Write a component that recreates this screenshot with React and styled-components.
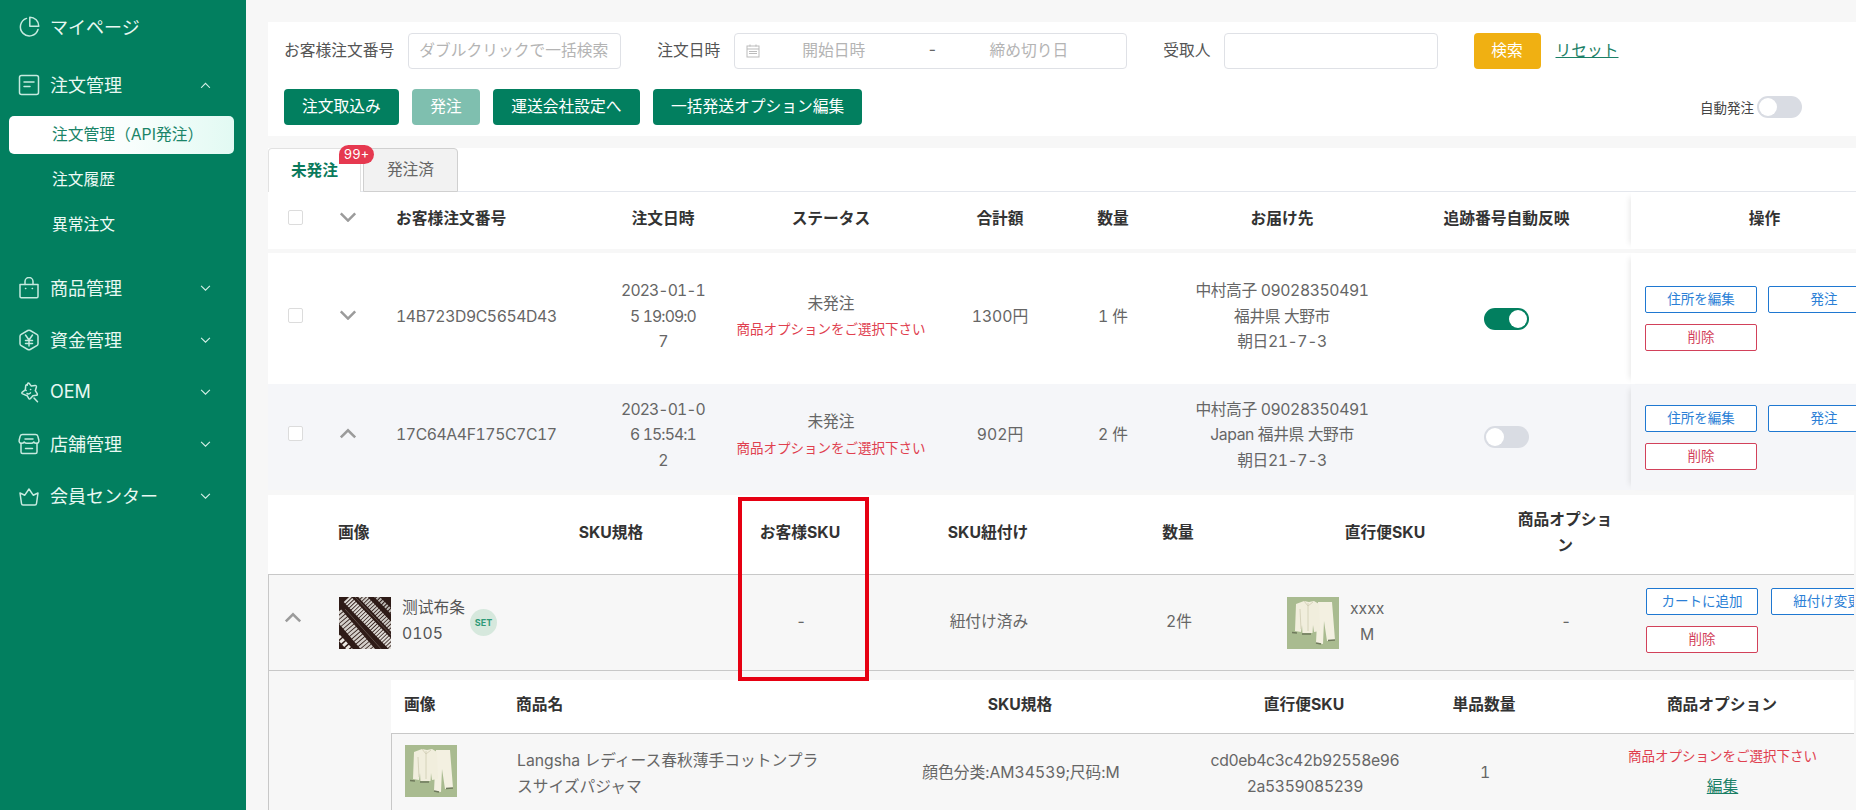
import React from "react";
import styled, { createGlobalStyle } from "styled-components";

const GlobalStyle = createGlobalStyle`
  html, body {
    margin: 0;
    padding: 0;
    height: 100%;
    overflow: hidden;
    background: #f7f7f7;
  }
  body {
    font-family: Inter, "Noto Sans CJK JP", sans-serif;
    font-size: 15.75px;
    font-variant-numeric: tabular-nums;
    color: #666;
  }
  * {
    box-sizing: border-box;
  }
`;

const orders = [
  {
    id: "14B723D9C5654D43",
    date: ["2023-01-1", "5 19:09:0", "7"],
    total: "1300円",
    qty: "1 件",
    address: ["中村高子 09028350491", "福井県 大野市", "朝日21-7-3"],
    on: true,
    open: false,
  },
  {
    id: "17C64A4F175C7C17",
    date: ["2023-01-0", "6 15:54:1", "2"],
    total: "902円",
    qty: "2 件",
    address: ["中村高子 09028350491", "Japan 福井県 大野市", "朝日21-7-3"],
    on: false,
    open: true,
  },
];

const Chevron = ({ up, size = 18, color = "#9b9b9b", width = 2.8 }) => (
  <svg width={size} height={size * 0.6} viewBox="0 0 20 12" fill="none" stroke={color} strokeWidth={width}>
    <path d={up ? "M2 10.5L10 2.5l8 8" : "M2 1.5l8 8 8-8"} />
  </svg>
);

const NavIcon = ({ children }) => (
  <svg width="22" height="22" viewBox="0 0 22 22" fill="none" stroke="#c6eadf" strokeWidth="1.5" strokeLinecap="round" strokeLinejoin="round">
    {children}
  </svg>
);

const navIcons = {
  pie: (
    <>
      <path d="M8.500 2.400A9 9 0 1 0 20 13.500" />
      <path d="M11.800 1.200a9 9 0 0 1 9 9h-9z" />
    </>
  ),
  doc: (
    <>
      <rect x="1.500" y="1.500" width="19" height="19" rx="2" />
      <path d="M6 8h10M6 12.500h6" />
    </>
  ),
  bag: (
    <>
      <path d="M2 7.500h18v12a1.200 1.200 0 0 1-1.200 1.200H3.200A1.200 1.200 0 0 1 2 19.500z" />
      <path d="M7 7.500V4.500a4 4 0 0 1 8 0v3" />
      <path d="M7.500 11.500h.3M14.200 11.500h.3" />
    </>
  ),
  yen: (
    <>
      <path d="M9.800 1.500a2.400 2.400 0 0 1 2.400 0l6.600 3.800a2.400 2.400 0 0 1 1.200 2v7.400a2.400 2.400 0 0 1-1.200 2l-6.600 3.800a2.400 2.400 0 0 1-2.400 0l-6.600-3.800a2.400 2.400 0 0 1-1.200-2V7.300a2.400 2.400 0 0 1 1.200-2z" />
      <path d="M7.500 6l3.500 5 3.500-5M11 11v6M7.500 11.500h7M7.500 14.500h7" />
    </>
  ),
  star: (
    <>
      <path d="M9.500 2.800c.5-.9 1.300-.9 1.800-.3l2 2.600 3.800-.6c1 -.1 1.500.6 1.300 1.500l-1.100 3.700 1.900 3c.4.800 0 1.500-.9 1.600l-3.400.4-2.400 2.800c-.6.600-1.400.5-1.800-.2l-1.600-2.600-4.500-1.800c-.9-.4-1-1.300-.3-1.800l3-2.200.4-4c.1-.9.900-1.300 1.600-.8z" />
      <path d="M8 9.500h.2M12.500 8.500h.2M9 12.500c1.300.8 2.600.6 3.500-.6M16 17l3.500 3.800" />
    </>
  ),
  store: (
    <>
      <path d="M4.500 1.500h13c1.300 0 2 .6 2.300 1.600l1 3.900c.5 2-.8 3.300-2.500 3.300-1.100 0-2-.5-2.500-1.300-.6.800-1.600 1.300-2.500 1.300h-4.600c-.9 0-1.900-.5-2.500-1.300-.5.800-1.400 1.300-2.500 1.300C2 10.300.7 9 1.200 7l1-3.900c.3-1 1-1.600 2.300-1.600z" />
      <path d="M7 6h8M3 10.300V19c0 1 .7 1.500 1.500 1.500h13c.8 0 1.500-.5 1.500-1.500v-8.700M7.500 15.500h7" />
    </>
  ),
  crown: (
    <path d="M2 8l4.800 2.200L11 4l4.200 6.200L20 8l-1.500 10.500c-.1 1-.8 1.500-1.500 1.500H5c-.7 0-1.400-.5-1.500-1.500z" />
  ),
};

const LaceThumb = () => (
  <ThumbSvg viewBox="0 0 52 52">
    <rect width="52" height="52" fill="#2e1b17" />
    <g fill="none">
      <path d="M-2 16L34 58" stroke="#d4cfca" strokeWidth="11" strokeDasharray="2.500 .8" />
      <path d="M8 2L54 50" stroke="#dedad5" strokeWidth="9" strokeDasharray="2 .8" />
      <path d="M22 -2L58 36" stroke="#cfcbc6" strokeWidth="7" strokeDasharray="2 .8" />
      <path d="M36 -2L60 22" stroke="#bdb9b4" strokeWidth="4" strokeDasharray="2 1" />
      <path d="M-4 36L14 56" stroke="#ece9e4" strokeWidth="5" strokeDasharray="3 1.500" />
      <path d="M6 12L44 54M16 0L56 42" stroke="#5a4a44" strokeWidth="1" />
    </g>
  </ThumbSvg>
);

const PajamaThumb = () => (
  <ThumbSvg viewBox="0 0 52 52">
    <rect width="52" height="52" fill="#a9bb90" />
    <path d="M31 5h14l3 38-8 1-3-20-1 23-7-1z" fill="#f3f0e1" />
    <path d="M9 7l8-3 5 1 5-1 5 3 1 27-6 1-1-7-.5 8-10 0-.5-8-1 7-6-1z" fill="#f1eedd" />
    <path d="M21 6v28M17 4l4 5 5-4M13 12l1 20" stroke="#cfcbb2" strokeWidth="0.8" fill="none" />
    <path d="M5 35.500l5 .5M15 37l9 0M29 46l5 1M41 43.500l7-.5" stroke="#6f7a5c" strokeWidth="1.600" />
  </ThumbSvg>
);

const App = () => {
  return (
    <Page>
      <GlobalStyle />
      <Sidebar>
        <NavItem>
          <NavIcon>{navIcons.pie}</NavIcon>
          <NavLabel>マイページ</NavLabel>
        </NavItem>
        <NavGroup>
          <NavItem>
            <NavIcon>{navIcons.doc}</NavIcon>
            <NavLabel>注文管理</NavLabel>
            <NavArrow><Chevron up size={11} color="#d4f0e7" width={2} /></NavArrow>
          </NavItem>
          <SubItem $active>注文管理（API発注）</SubItem>
          <SubItem>注文履歴</SubItem>
          <SubItem>異常注文</SubItem>
        </NavGroup>
        {[
          ["bag", "商品管理"],
          ["yen", "資金管理"],
          ["star", "OEM"],
          ["store", "店舗管理"],
          ["crown", "会員センター"],
        ].map(([icon, label]) => (
          <NavItem key={label}>
            <NavIcon>{navIcons[icon]}</NavIcon>
            <NavLabel>{label}</NavLabel>
            <NavArrow><Chevron size={11} color="#d4f0e7" width={2} /></NavArrow>
          </NavItem>
        ))}
      </Sidebar>

      <Main>
        <FilterCard>
          <FilterRow>
            <FieldLabel>お客様注文番号</FieldLabel>
            <TextBox $w={213} $gap={14} placeholder="ダブルクリックで一括検索" />
            <FieldLabel $ml={36}>注文日時</FieldLabel>
            <DateBox>
              <svg width="14" height="14" viewBox="0 0 14 14" fill="none" stroke="#bbb" strokeWidth="1">
                <rect x="1" y="2" width="12" height="11" />
                <path d="M1 5h12M3 7.500h8M3 9.500h8M4 .5v2M10 .5v2" />
              </svg>
              <DateHint $left={42}>開始日時</DateHint>
              <DateDash>-</DateDash>
              <DateHint $left={52}>締め切り日</DateHint>
            </DateBox>
            <FieldLabel $ml={36}>受取人</FieldLabel>
            <TextBox $w={214} $gap={13} />
            <SearchButton>検索</SearchButton>
            <ResetLink>リセット</ResetLink>
          </FilterRow>
          <FilterRow $mt={20}>
            <GreenButton>注文取込み</GreenButton>
            <GreenButton $disabled>発注</GreenButton>
            <GreenButton>運送会社設定へ</GreenButton>
            <GreenButton>一括発送オプション編集</GreenButton>
            <AutoBox>
              自動発注
              <Toggle />
            </AutoBox>
          </FilterRow>
        </FilterCard>

        <TableCard>
          <TabBar>
            <Tab $active>
              未発注
              <Badge>99+</Badge>
            </Tab>
            <Tab>発注済</Tab>
          </TabBar>

          <OrderGrid $head>
            <CheckCell><Check /></CheckCell>
            <ExpandCell><Chevron /></ExpandCell>
            <HeadCell $left>お客様注文番号</HeadCell>
            <HeadCell>注文日時</HeadCell>
            <HeadCell>ステータス</HeadCell>
            <HeadCell>合計額</HeadCell>
            <HeadCell>数量</HeadCell>
            <HeadCell>お届け先</HeadCell>
            <HeadCell>追跡番号自動反映</HeadCell>
            <FixedCell><FixedHead>操作</FixedHead></FixedCell>
          </OrderGrid>
          <HeadGap />

          {orders.map((o) => (
            <OrderGrid key={o.id} $open={o.open}>
              <CheckCell><Check /></CheckCell>
              <ExpandCell><Chevron up={o.open} /></ExpandCell>
              <BodyCell $left $num>{o.id}</BodyCell>
              <DateCell>
                {o.date.map((line) => <div key={line}>{line}</div>)}
              </DateCell>
              <BodyCell>
                未発注
                <RedNote>商品オプションをご選択下さい</RedNote>
              </BodyCell>
              <BodyCell>{o.total}</BodyCell>
              <BodyCell>{o.qty}</BodyCell>
              <BodyCell $num>
                {o.address.map((line) => <div key={line}>{line}</div>)}
              </BodyCell>
              <ToggleCell><Toggle $on={o.on} /></ToggleCell>
              <FixedCell>
                <ActionGrid>
                  <ActionButton>住所を編集</ActionButton>
                  <ActionButton>発注</ActionButton>
                  <ActionButton $danger>削除</ActionButton>
                </ActionGrid>
              </FixedCell>
            </OrderGrid>
          ))}
        </TableCard>

        <DetailBlock>
          <DetailGrid $head>
            <span />
            <DetailHead $left>画像</DetailHead>
            <DetailHead>SKU規格</DetailHead>
            <DetailHead>お客様SKU</DetailHead>
            <DetailHead>SKU紐付け</DetailHead>
            <DetailHead>数量</DetailHead>
            <DetailHead>直行便SKU</DetailHead>
            <DetailHead><OptionWrap>商品オプション</OptionWrap></DetailHead>
            <span />
          </DetailGrid>
          <DetailGrid>
            <DetailArrow><Chevron up /></DetailArrow>
            <Product>
              <LaceThumb />
              <ProductName>测试布条 0105</ProductName>
              <SetBadge>SET</SetBadge>
            </Product>
            <span />
            <DetailCell>-</DetailCell>
            <DetailCell>紐付け済み</DetailCell>
            <DetailCell>2件</DetailCell>
            <DirectSku>
              <PajamaThumb />
              <DirectText>xxxx<br />M</DirectText>
            </DirectSku>
            <DetailCell>-</DetailCell>
            <RowActions>
              <ActionButton>カートに追加</ActionButton>
              <ActionButton>紐付け変更</ActionButton>
              <ActionButton $danger>削除</ActionButton>
            </RowActions>
          </DetailGrid>

          <NestedArea>
            <NestedGrid $head>
              <DetailHead $left $pad={13}>画像</DetailHead>
              <DetailHead $left>商品名</DetailHead>
              <DetailHead>SKU規格</DetailHead>
              <DetailHead>直行便SKU</DetailHead>
              <DetailHead>単品数量</DetailHead>
              <DetailHead $pl={22}>商品オプション</DetailHead>
            </NestedGrid>
            <NestedGrid>
              <NestedThumb><PajamaThumb /></NestedThumb>
              <NestedName>Langsha レディース春秋薄手コットンプラスサイズパジャマ</NestedName>
              <DetailCell>顔色分类:AM34539;尺码:M</DetailCell>
              <NestedSku>cd0eb4c3c42b92558e96<br />2a5359085239</NestedSku>
              <DetailCell>1</DetailCell>
              <OptionCell>
                <RedNote>商品オプションをご選択下さい</RedNote>
                <EditLink>編集</EditLink>
              </OptionCell>
            </NestedGrid>
          </NestedArea>
        </DetailBlock>
      </Main>

      <Highlight />
    </Page>
  );
};

const Page = styled.div`
  position: relative;
  display: flex;
  width: 1856px;
  height: 810px;
  overflow: hidden;
`;

const Sidebar = styled.nav`
  flex: 0 0 246px;
  background: #027f5f;
  padding-top: 1px;
  color: #e8f8f2;
`;

const NavGroup = styled.div`
  padding: 6px 0 11px;
`;

const NavItem = styled.div`
  display: flex;
  align-items: center;
  height: 52px;
  padding-left: 18px;
`;

const NavLabel = styled.span`
  margin-left: 10px;
  padding-bottom: 2px;
  font-size: 18px;
  flex: 1;
`;

const NavArrow = styled.span`
  display: flex;
  width: 46px;
`;

const SubItem = styled.div`
  display: flex;
  align-items: center;
  height: 38px;
  margin: ${(p) => (p.$active ? "5px" : "0")} 12px 7px 9px;
  padding: 0 0 3px 43px;
  border-radius: 5px;
  color: ${(p) => (p.$active ? "#1a8468" : "#eefaf6")};
  background: ${(p) => (p.$active ? "linear-gradient(90deg, #fff 40%, #e2faf3)" : "none")};
`;

const Main = styled.main`
  flex: 1;
  min-width: 0;
  padding: 22px 0 0 22px;
  background: #f7f7f7;
`;

const FilterCard = styled.section`
  height: 114px;
  padding: 11px 54px 0 16px;
  background: #fff;
`;

const FilterRow = styled.div`
  display: flex;
  align-items: center;
  height: 36px;
  margin-top: ${(p) => p.$mt || 0}px;
`;

const FieldLabel = styled.label`
  margin-left: ${(p) => p.$ml || 0}px;
  padding-bottom: 3px;
  color: #555;
  white-space: nowrap;
`;

const TextBox = styled.input`
  width: ${(p) => p.$w}px;
  height: 36px;
  margin-left: ${(p) => p.$gap}px;
  padding: 0 10px 2px;
  border: 1px solid #dfe1e6;
  border-radius: 4px;
  font: inherit;
  outline: none;
  &::placeholder {
    color: #b4b4b4;
  }
`;

const DateBox = styled.div`
  display: flex;
  align-items: center;
  width: 393px;
  height: 36px;
  margin-left: 14px;
  padding-left: 11px;
  border: 1px solid #dfe1e6;
  border-radius: 4px;
  background: #fff;
`;

const DateHint = styled.span`
  margin-left: ${(p) => p.$left}px;
  padding-bottom: 3px;
  color: #b4b4b4;
  white-space: nowrap;
`;

const DateDash = styled.span`
  margin-left: 62px;
  padding-bottom: 3px;
  color: #666;
`;

const SearchButton = styled.button`
  width: 67px;
  height: 36px;
  margin-left: 36px;
  padding: 0 0 4px;
  border: none;
  border-radius: 4px;
  background: #f0b012;
  color: #fff;
  font: inherit;
`;

const ResetLink = styled.a`
  margin-left: 15px;
  padding-bottom: 3px;
  color: #1b7f66;
  text-decoration: underline;
`;

const GreenButton = styled.button`
  height: 36px;
  margin-right: 13.5px;
  padding: 0 18px 4px;
  border: none;
  border-radius: 4px;
  background: ${(p) => (p.$disabled ? "#7fbfaf" : "#027f5f")};
  color: #fff;
  font: inherit;
  white-space: nowrap;
`;

const AutoBox = styled.div`
  display: flex;
  align-items: center;
  gap: 3px;
  margin-left: auto;
  font-size: 13.5px;
  color: #444;
`;

const Toggle = styled.span`
  position: relative;
  display: block;
  width: 45px;
  height: 22px;
  border-radius: 11px;
  background: ${(p) => (p.$on ? "#027f5f" : "#d9dce3")};
  &::after {
    content: "";
    position: absolute;
    top: 2px;
    left: ${(p) => (p.$on ? "25px" : "2px")};
    width: 18px;
    height: 18px;
    border-radius: 50%;
    background: #fff;
  }
`;

const TableCard = styled.section`
  margin-top: 12px;
`;

const TabBar = styled.div`
  display: flex;
  gap: 2px;
  height: 44px;
  background: #fff;
  border-bottom: 1px solid #e4e7ed;
`;

const Tab = styled.div`
  position: relative;
  display: flex;
  align-items: center;
  justify-content: center;
  width: ${(p) => (p.$active ? "93px" : "95px")};
  height: 44px;
  padding-bottom: 3px;
  border: 1px solid ${(p) => (p.$active ? "#e2e2e2" : "#d0d0d0")};
  border-bottom: ${(p) => (p.$active ? "none" : "1px solid #d0d0d0")};
  border-radius: 4px 4px 0 0;
  background: ${(p) => (p.$active ? "#fff" : "#f2f2f2")};
  color: ${(p) => (p.$active ? "#0b7a5c" : "#666")};
  font-weight: ${(p) => (p.$active ? 700 : 400)};
`;

const Badge = styled.span`
  position: absolute;
  z-index: 2;
  top: -4px;
  left: 70px;
  width: 35px;
  height: 19px;
  border-radius: 10px 10px 10px 0;
  background: #e63950;
  color: #fff;
  font-size: 13px;
  font-weight: 400;
  line-height: 18px;
  text-align: center;
`;

const OrderGrid = styled.div`
  display: grid;
  grid-template-columns: 60px 64px 221px 100px 236px 102px 124px 214px 235px 1fr;
  align-items: center;
  height: ${(p) => (p.$head ? "57px" : p.$open ? "106px" : "131px")};
  background: ${(p) => (p.$open ? "#f5f6f9" : "#fff")};
  line-height: 25.5px;
`;

const HeadGap = styled.div`
  height: 4px;
`;

const CheckCell = styled.div`
  display: flex;
  padding: 0 0 7px 20px;
`;

const Check = styled.span`
  width: 15px;
  height: 15px;
  border: 1px solid #dcdcdc;
  border-radius: 2px;
  background: #fff;
`;

const ExpandCell = styled.div`
  display: flex;
  padding: 0 0 7px 11px;
`;

const HeadCell = styled.div`
  padding-bottom: 3px;
  padding-left: ${(p) => (p.$left ? "4px" : "0")};
  color: #333;
  font-weight: 700;
  text-align: ${(p) => (p.$left ? "left" : "center")};
`;

const FixedHead = styled(HeadCell)`
  padding-left: 28px;
`;

const BodyCell = styled.div`
  padding-bottom: 4px;
  padding-left: ${(p) => (p.$left ? "4px" : "0")};
  letter-spacing: ${(p) => (p.$num ? "-0.4px" : "0")};
  text-align: ${(p) => (p.$left ? "left" : "center")};
  white-space: nowrap;
`;

const DateCell = styled(BodyCell)`
  letter-spacing: -0.9px;
`;

const RedNote = styled.div`
  color: #e0404f;
  font-size: 13.5px;
  letter-spacing: 0;
  line-height: 26px;
  white-space: nowrap;
`;

const ToggleCell = styled.div`
  display: flex;
  justify-content: center;
`;

const FixedCell = styled.div`
  align-self: stretch;
  display: flex;
  flex-direction: column;
  justify-content: center;
  margin-left: 7px;
  padding-left: 14px;
  box-shadow: -6px 0 6px -5px rgba(0, 0, 0, 0.1);
`;

const ActionGrid = styled.div`
  display: grid;
  grid-template-columns: 112px 112px;
  gap: 11px;
`;

const RowActions = styled(ActionGrid)`
  gap: 11px 13px;
  margin: -5px 0 0 10px;
`;

const ActionButton = styled.button`
  height: 27px;
  padding: 0 0 3px;
  border: 1px solid ${(p) => (p.$danger ? "#d2415a" : "#1f78d1")};
  border-radius: 2px;
  background: #fff;
  color: ${(p) => (p.$danger ? "#d2415a" : "#2b7fd6")};
  font-family: inherit;
  font-size: 13.5px;
  white-space: nowrap;
`;

const DetailBlock = styled.section`
  margin-top: 5px;
  padding-right: 2px;
`;

const DetailGrid = styled.div`
  display: grid;
  grid-template-columns: 70px 179px 188px 190px 186px 194px 220px 140px 1fr;
  align-items: center;
  height: ${(p) => (p.$head ? "80px" : "96px")};
  overflow: hidden;
  background: ${(p) => (p.$head ? "#fff" : "#f7f7f7")};
  border-bottom: 1px solid #c8c8c8;
  border-left: ${(p) => (p.$head ? "none" : "1px solid #c8c8c8")};
  line-height: 26px;
`;

const DetailHead = styled.div`
  padding-bottom: 3px;
  padding-left: ${(p) => p.$pad || p.$pl || 0}px;
  color: #333;
  font-weight: 700;
  text-align: ${(p) => (p.$left ? "left" : "center")};
`;

const OptionWrap = styled.div`
  width: 100px;
  margin: 0 auto;
`;

const DetailArrow = styled.div`
  display: flex;
  padding: 0 0 10px 15px;
`;

const Product = styled.div`
  display: flex;
  align-items: center;
  gap: 11px;
`;

const ThumbSvg = styled.svg`
  flex: none;
  display: block;
  width: 52px;
  height: 52px;
`;

const ProductName = styled.div`
  width: 66px;
  margin-top: -3px;
  margin-right: -9px;
  color: #555;
`;

const SetBadge = styled.span`
  flex: none;
  width: 27px;
  height: 27px;
  border-radius: 50%;
  background: #d6e8dd;
  color: #2f9a78;
  font-size: 9px;
  font-weight: 700;
  line-height: 27px;
  text-align: center;
`;

const DetailCell = styled.div`
  padding-bottom: 2px;
  text-align: center;
  white-space: nowrap;
`;

const DirectSku = styled.div`
  display: flex;
  align-items: center;
  gap: 11px;
  padding-left: 11px;
`;

const DirectText = styled.div`
  text-align: center;
  min-width: 34px;
  margin-top: -2px;
`;

const NestedArea = styled.div`
  height: 140px;
  padding: 9px 0 0 122px;
  background: #f7f7f7;
  border-left: 1px solid #c8c8c8;
`;

const NestedGrid = styled.div`
  display: grid;
  grid-template-columns: 125px 316px 376px 192px 168px 1fr;
  align-items: center;
  height: ${(p) => (p.$head ? "54px" : "79px")};
  background: ${(p) => (p.$head ? "#fff" : "#f7f7f7")};
  border-bottom: ${(p) => (p.$head ? "1px solid #c8c8c8" : "none")};
  border-left: ${(p) => (p.$head ? "none" : "1px solid #c8c8c8")};
  line-height: 26px;
`;

const NestedThumb = styled.div`
  align-self: start;
  padding: 11px 0 0 13px;
`;

const NestedName = styled.div`
  padding-right: 8px;
  word-break: break-all;
`;

const NestedSku = styled.div`
  letter-spacing: -0.4px;
  text-align: center;
`;

const OptionCell = styled.div`
  display: flex;
  flex-direction: column;
  align-items: center;
  gap: 5px;
  padding: 0 0 5px 22px;
`;

const EditLink = styled.a`
  color: #1b7f66;
  text-decoration: underline;
`;

// 参考画像の赤枠
const Highlight = styled.div`
  position: absolute;
  left: 738px;
  top: 497px;
  width: 131px;
  height: 184px;
  border: 4px solid #e60012;
  pointer-events: none;
`;

export default App;
